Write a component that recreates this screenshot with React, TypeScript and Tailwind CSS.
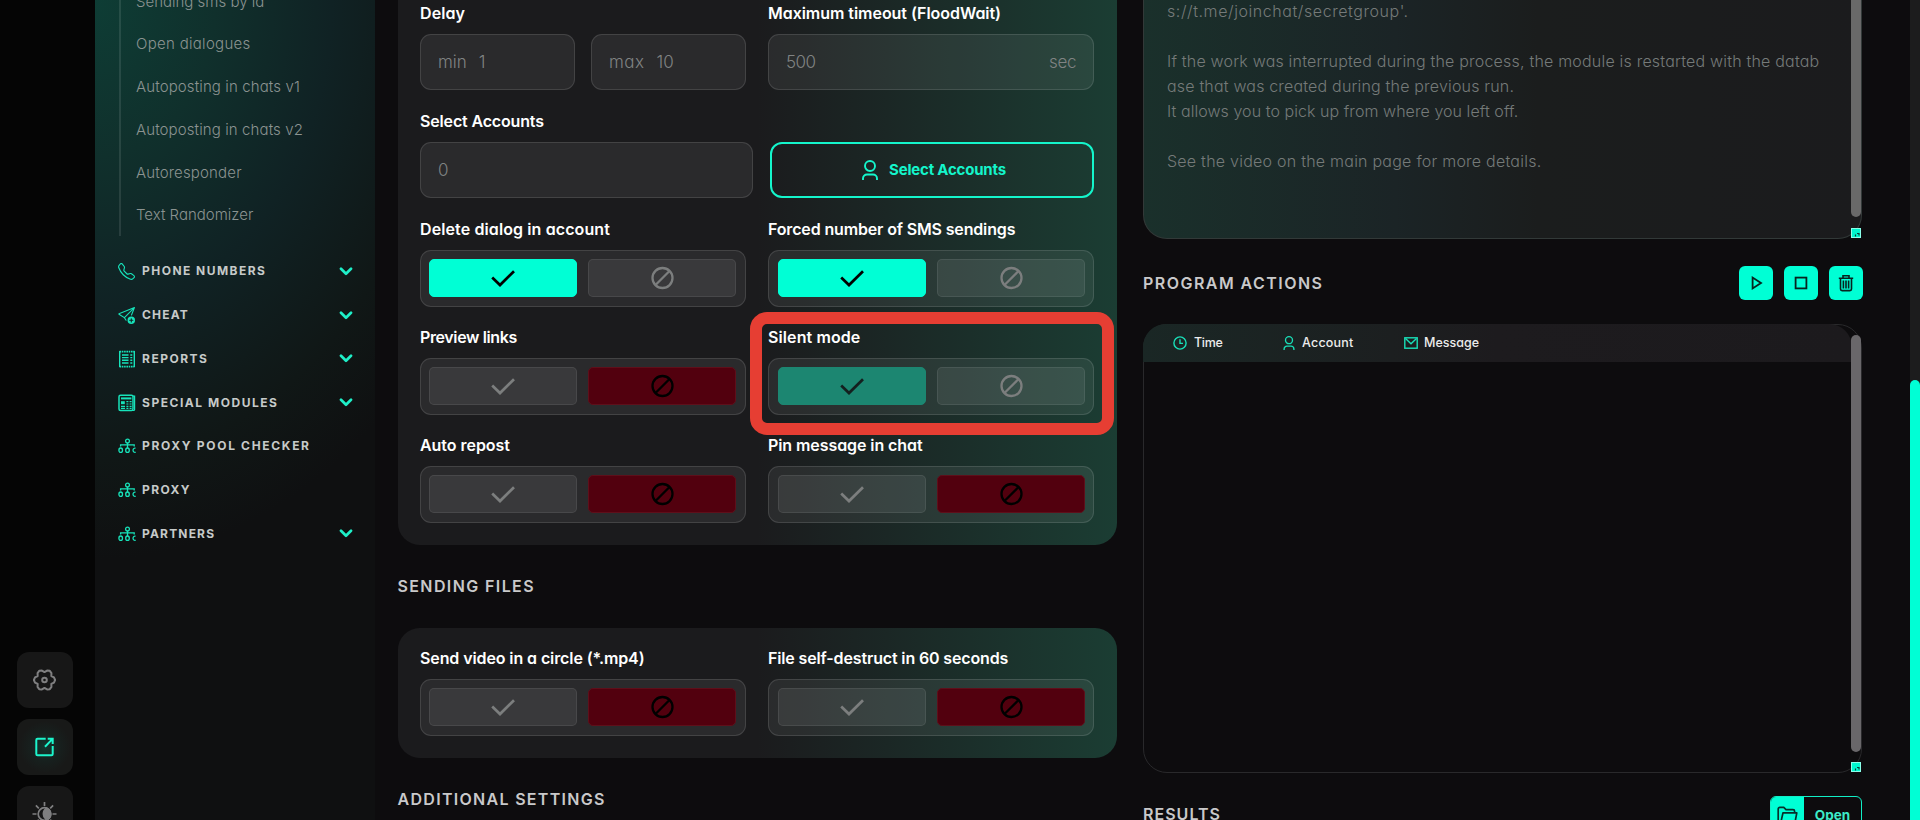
import type { ReactNode } from "react";
import { BsSendPlus, BsTelephone } from "react-icons/bs";

const Check = () => (
  <svg width="24" height="17" viewBox="0 0 24 17" fill="none" stroke="currentColor" strokeWidth="2.7">
    <path d="M1.2 7.5 9 15 23 1.2" />
  </svg>
);

const Ban = () => (
  <svg className="translate-x-[0.5px]" width="24" height="24" viewBox="0 0 24 24" fill="none" stroke="currentColor" strokeWidth="2.3">
    <circle cx="12" cy="12" r="10" />
    <path d="M5 19 19 5" />
  </svg>
);

const Chevron = () => (
  <svg width="14" height="9" viewBox="0 0 14 9" fill="none" stroke="#1fefc8" strokeWidth="2.7" strokeLinecap="round" strokeLinejoin="round">
    <path d="M2 1.8 7 6.7l5-4.9" />
  </svg>
);

const User = ({ className }: { className: string }) => (
  <svg className={className} viewBox="0 0 16 20" fill="none" stroke="currentColor" strokeWidth="1.9">
    <circle cx="8" cy="6" r="5" />
    <path d="M1 20v-1.5a4 4 0 0 1 4-4h6a4 4 0 0 1 4 4V20" />
  </svg>
);

const ReportIcon = () => (
  <svg width="18" height="18" viewBox="0 0 18 18" fill="none" stroke="currentColor">
    <path d="M1.7 1v16M16.3 1v16" strokeWidth="1.4" />
    <path d="M1.5 1.6h15M1.5 16.6h15" strokeWidth="1.6" strokeDasharray="1.6 .7" />
    <path d="M4 5h6.5M4 7.6h6.5M4 10.3h6.5M4 13h6.5M12.3 5h2M12.3 7.6h2M12.3 10.3h2M12.3 13h2" strokeWidth="1.4" />
  </svg>
);

const NewsIcon = () => (
  <svg width="18" height="18" viewBox="0 0 18 18" fill="none" stroke="currentColor">
    <rect x="1" y="1.2" width="14" height="15.3" rx="1.5" strokeWidth="1.5" />
    <path d="M15 2.2h1.6v13.4a1 1 0 0 1-1 .9H3" strokeWidth="1.2" />
    <path d="M3 4.4h10.4" strokeWidth="2" />
    <rect x="3" y="7.2" width="3.8" height="3" fill="currentColor" stroke="none" />
    <path d="M8.4 7.6h2M11.6 7.6h2M8.4 10h2M11.6 10h2M3 12.4h4M8.4 12.4h2M11.6 12.4h2M3 14.4h4M8.4 14.4h2M11.6 14.4h2" strokeWidth="1.2" />
  </svg>
);

const TreeIcon = () => (
  <svg width="18" height="16" viewBox="0 0 18 16" fill="none" stroke="currentColor" strokeWidth="1.3">
    <circle cx="9.5" cy="3" r="1.9" />
    <path d="M9.5 4.9V10M2.6 8.6V6.9h13.6v1.7" />
    <ellipse cx="2.7" cy="12.2" rx="1.8" ry="2.2" />
    <ellipse cx="9.5" cy="12.2" rx="1.8" ry="2.2" />
    <path d="M17.6 10.3a1.8 2.1 0 1 0 0 3.8" />
  </svg>
);

const gearPoints = Array.from({ length: 24 }, (_, i) => {
  const a = (i * Math.PI) / 12;
  const r = [10.6, 9.8, 7.9, 9.8][i % 4];
  return `${(12 + r * Math.cos(a)).toFixed(2)},${(12 + r * Math.sin(a)).toFixed(2)}`;
}).join(" ");

const Gear = () => (
  <svg className="-translate-x-[0.5px]" width="24" height="24" viewBox="0 0 24 24" fill="none" stroke="#7f7f80" strokeWidth="2" strokeLinejoin="round">
    <polygon points={gearPoints} />
    <circle cx="12" cy="12" r="2.3" />
  </svg>
);

const Export = () => (
  <svg className="-translate-x-[0.5px]" width="20" height="20" viewBox="0 0 20 20" fill="none" stroke="#1cf5cc" strokeWidth="2">
    <path d="M11.2 1.8H3a1.2 1.2 0 0 0-1.2 1.2v14a1.2 1.2 0 0 0 1.2 1.2h14a1.2 1.2 0 0 0 1.2-1.2V9M10.5 9.7 17.6 2.4M13.2 1.8h5V7" />
  </svg>
);

const SunMoon = () => (
  <svg className="-translate-x-[0.5px]" width="26" height="26" viewBox="0 0 26 26" fill="none" stroke="#7f7f80" strokeWidth="1.7">
    <circle cx="13" cy="13" r="6.3" />
    <path d="M15 7.3a6 6 0 0 1 0 11.4 6.8 6.8 0 0 1 0-11.4z" fill="#7f7f80" />
    <path d="M13 1v4M13 21v4M1 13h4M21 13h4M4.4 4.4l2.9 2.9M21.6 4.4l-2.9 2.9M4.4 21.6l2.9-2.9M21.6 21.6l-2.9-2.9" />
  </svg>
);

const subItems: [string, string][] = [
  ["Sending sms by id", "tracking-normal"],
  ["Open dialogues", "tracking-[0.3px]"],
  ["Autoposting in chats v1", "tracking-[0.12px]"],
  ["Autoposting in chats v2", "tracking-[0.11px]"],
  ["Autoresponder", "tracking-[0.16px]"],
  ["Text Randomizer", "tracking-normal"],
];

const navItems: { text: string; track: string; icon: ReactNode; open?: boolean }[] = [
  { text: "PHONE NUMBERS", track: "tracking-[1.47px]", icon: <BsTelephone size={17} />, open: true },
  { text: "CHEAT", track: "tracking-[1.2px]", icon: <BsSendPlus size={17} />, open: true },
  { text: "REPORTS", track: "tracking-[1.5px]", icon: <ReportIcon />, open: true },
  { text: "SPECIAL MODULES", track: "tracking-[1.53px]", icon: <NewsIcon />, open: true },
  { text: "PROXY POOL CHECKER", track: "tracking-[1.68px]", icon: <TreeIcon /> },
  { text: "PROXY", track: "tracking-[1.4px]", icon: <TreeIcon /> },
  { text: "PARTNERS", track: "tracking-[1.17px]", icon: <TreeIcon />, open: true },
];

function RailButton({ children, glow }: { children: ReactNode; glow?: boolean }) {
  return (
    <div
      className={
        "flex size-14 shrink-0 items-center justify-center rounded-xl bg-[#171717] " +
        (glow ? "bg-[radial-gradient(circle_at_center,#12382f_0%,#17201e_35%,#181918_65%)]" : "")
      }
    >
      {children}
    </div>
  );
}

function Rail() {
  return (
    <div className="flex w-[95px] shrink-0 flex-col gap-[11px] bg-[#050505] pt-[652px] pl-[17px]">
      <RailButton><Gear /></RailButton>
      <RailButton glow><Export /></RailButton>
      <RailButton><SunMoon /></RailButton>
    </div>
  );
}

function Sidebar() {
  return (
    <aside className="w-[280px] shrink-0 bg-[#0f1011] bg-[radial-gradient(ellipse_430px_560px_at_0_0,#0e3d35_0%,#10302c_28%,#102224_55%,#101716_82%,#0f1011_100%)] px-6">
      <ul className="-mt-[20.6px] border-l-2 border-white/10">
        {subItems.map(([text, track]) => (
          <li key={text} className={"flex h-[42.75px] items-center pt-[2px] pl-[15px] text-[15px] font-light whitespace-nowrap text-[#8b9391] " + track}>
            {text}
          </li>
        ))}
      </ul>
      <ul className="mt-[13.7px] -mr-1">
        {navItems.map((n) => (
          <li key={n.text} className="flex h-[43.75px] items-center text-[#17e3ba]">
            <span className="-ml-[1px] flex w-6 shrink-0">{n.icon}</span>
            <span className={"flex-1 text-xs font-bold whitespace-nowrap text-[#c6cac9] " + n.track}>{n.text}</span>
            {n.open && <span className="mr-[2px]"><Chevron /></span>}
          </li>
        ))}
      </ul>
    </aside>
  );
}

function Label({ children, track = "" }: { children: ReactNode; track?: string }) {
  return <div className={"mb-[11px] h-5 text-base leading-5 font-semibold whitespace-nowrap text-white " + track}>{children}</div>;
}

const field = "flex h-14 items-center rounded-[11px] border border-white/12 bg-white/[0.065] px-[17px] pt-[2px] text-[17px] font-light text-[#808383]";

type State = "yes" | "no" | "dim";

function Toggle({ label, track, state, right }: { label: string; track?: string; state: State; right?: boolean }) {
  const base = "flex h-[38px] w-[148px] items-center justify-center rounded-[5px] border ";
  const idle = "border-white/8 bg-white/[0.075] text-[#7c7e7e]";
  const yes = state === "yes" ? "border-[#00ffd5] bg-[#00ffd5] text-black" : state === "dim" ? "border-[#1c8671] bg-[#1c8671] text-[#14201f]" : idle;
  return (
    <div className="w-[326px]">
      <Label track={track}>{label}</Label>
      <div className={"flex h-[57px] gap-[11px] rounded-[11px] border border-white/12 bg-white/[0.065] pt-2 " + (right ? "pl-[9px]" : "pl-2")}>
        <div className={base + yes}><Check /></div>
        <div className={base + (state === "no" ? "border-[#5e0f1a] bg-[#52000e] text-black" : idle)}><Ban /></div>
      </div>
    </div>
  );
}

const cardBg = "w-[719px] bg-[linear-gradient(90deg,#1b1b1d_0%,#1b1b1d_50%,#1b2725_68%,#1b3d33_100%)] pl-[22px]";
const heading = "text-base font-semibold whitespace-nowrap text-[#c9c9ca] ";

function FormColumn() {
  return (
    <div className="w-[719px] shrink-0">
      <section className={cardBg + " relative h-[545px] rounded-b-[22px] pt-[3px]"}>
        <div className="flex gap-[22px]">
          <div className="w-[326px]">
            <Label track="tracking-[0.1px]">Delay</Label>
            <div className="flex gap-4">
              <div className={field + " w-[155px] gap-3"}><span>min</span><span>1</span></div>
              <div className={field + " w-[155px] gap-3"}><span className="tracking-[0.5px]">max</span><span>10</span></div>
            </div>
          </div>
          <div className="w-[326px]">
            <Label track="tracking-[-0.04px]">Maximum timeout (FloodWait)</Label>
            <div className={field + " justify-between"}>
              <span className="tracking-[-0.6px]">500</span>
              <span className="tracking-[-0.4px]">sec</span>
            </div>
          </div>
        </div>

        <div className="mt-[21px]">
          <Label track="tracking-[-0.16px]">Select Accounts</Label>
          <div className="flex gap-[17px]">
            <div className={field + " w-[333px]"}>0</div>
            <button className="flex h-14 w-[324px] items-center justify-center rounded-xl border-2 border-[#14f5cb] pl-1 text-[15px] font-bold tracking-[-0.2px] text-[#14f5cb]">
              <User className="mr-[11px] h-5 w-4" />
              Select Accounts
            </button>
          </div>
        </div>

        <div className="mt-[21px] grid grid-cols-[326px_326px] gap-x-[22px] gap-y-5">
          <Toggle label="Delete dialog in account" track="tracking-[0.11px]" state="yes" />
          <Toggle label="Forced number of SMS sendings" track="tracking-[-0.15px]" state="yes" right />
          <Toggle label="Preview links" track="tracking-[-0.38px]" state="no" />
          <Toggle label="Silent mode" track="tracking-[0.1px]" state="dim" right />
          <Toggle label="Auto repost" track="tracking-[-0.04px]" state="no" />
          <Toggle label="Pin message in chat" track="tracking-[-0.08px]" state="no" right />
        </div>

        <div className="pointer-events-none absolute top-[312px] left-[352px] h-[122.5px] w-[364px] rounded-[17px] border-[12px] border-[#e63e33]" />
      </section>

      <h2 className={heading + "mt-[29px] h-6 -translate-x-[0.5px] leading-6 tracking-[1.39px]"}>SENDING FILES</h2>

      <section className={cardBg + " mt-[30px] flex h-[130px] gap-[22px] rounded-[22px] pt-5"}>
        <Toggle label="Send video in a circle (*.mp4)" track="tracking-[-0.1px]" state="no" />
        <Toggle label="File self-destruct in 60 seconds" track="tracking-[-0.14px]" state="no" right />
      </section>

      <h2 className={heading + "mt-[29px] h-6 -translate-x-[0.5px] leading-6 tracking-[1.3px]"}>ADDITIONAL SETTINGS</h2>
    </div>
  );
}

const Grip = () => (
  <span className="absolute right-0 bottom-0 flex size-[10px] items-end justify-end border border-[#8affea] bg-[#00f5cd]">
    <svg width="6" height="6" viewBox="0 0 6 6" fill="none" stroke="#0b3b33" strokeWidth="1.2">
      <path d="M1.5 3.5v2M3 2.5h2v2" />
    </svg>
  </span>
);

const actionBtn = "flex size-[34px] items-center justify-center rounded-md bg-[#00ffd5] text-[#07241f]";

function OutputColumn() {
  return (
    <div className="w-[719px] shrink-0">
      <section className="relative h-[239px] rounded-b-[24px] border border-t-0 border-[#323938] bg-[linear-gradient(90deg,#1a302b_0%,#1b2426_35%,#1b1d1d_55%,#1b1b1d_100%)] pl-[23px]">
        <div className="-translate-y-px text-base leading-[25px] font-light whitespace-nowrap text-[#757a79]">
          <p className="tracking-[0.57px]">s://t.me/joinchat/secretgroup'.</p>
          <p className="mt-[25px] tracking-[0.2px]">If the work was interrupted during the process, the module is restarted with the datab</p>
          <p className="tracking-[0.18px]">ase that was created during the previous run.</p>
          <p className="tracking-[0.06px]">It allows you to pick up from where you left off.</p>
          <p className="mt-[25px] tracking-[0.24px]">See the video on the main page for more details.</p>
        </div>
        <span className="absolute top-0 right-0 h-[217px] w-[10px] rounded-b-full bg-[#696969]" />
        <Grip />
      </section>

      <div className="mt-[27px] flex h-[34px] items-center justify-between">
        <h2 className={heading + "tracking-[1.46px]"}>PROGRAM ACTIONS</h2>
        <div className="-mr-[0.5px] flex gap-[11px]">
          <button className={actionBtn}>
            <svg width="14" height="14" viewBox="0 0 14 14" fill="none" stroke="currentColor" strokeWidth="1.8"><path d="M3.6 1.6v10.8L12 7z" /></svg>
          </button>
          <button className={actionBtn}>
            <svg width="14" height="14" viewBox="0 0 14 14" fill="none" stroke="currentColor" strokeWidth="1.8"><rect x="1.6" y="1.6" width="10.8" height="10.8" /></svg>
          </button>
          <button className={actionBtn}>
            <svg width="16" height="18" viewBox="0 0 16 18" fill="none" stroke="currentColor" strokeWidth="1.6">
              <path d="M.8 4.2h14.4M5 4V1.8h6V4M2.5 4.4V15a1.6 1.6 0 0 0 1.6 1.6h7.8a1.6 1.6 0 0 0 1.6-1.6V4.4M5.4 6.4v8.2M8 6.4v8.2M10.6 6.4v8.2" />
            </svg>
          </button>
        </div>
      </div>

      <section className="relative mt-6 h-[449px] rounded-[24px] border border-[#29292b]">
        <div className="-mt-px -ml-px flex h-[38px] w-[709px] items-center rounded-t-[23px] bg-[linear-gradient(90deg,#1a2725_0%,#1c1f20_35%,#1d1b1e_50%,#1c1a1d_100%)] pl-[30px] text-[12.5px] font-medium text-[#ececec]">
          <div className="flex w-[110px] items-center">
            <svg className="mr-[7px] text-[#19dfb8]" width="14" height="14" viewBox="0 0 14 14" fill="none" stroke="currentColor" strokeWidth="1.4"><circle cx="7" cy="7" r="6.1" /><path d="M7 3.3V7.4h3" /></svg>
            <span className="tracking-[-0.3px]">Time</span>
          </div>
          <div className="flex w-[121px] items-center">
            <User className="mr-[7px] h-[14px] w-[12px] text-[#19dfb8]" />
            <span className="tracking-[0.2px]">Account</span>
          </div>
          <div className="flex items-center">
            <svg className="mr-[6px] text-[#19dfb8]" width="14" height="12" viewBox="0 0 14 12" fill="none" stroke="currentColor" strokeWidth="1.4"><rect x=".8" y=".8" width="12.4" height="10.4" /><path d="m1.5 1.5 5.5 5.3 5.5-5.3" /></svg>
            <span>Message</span>
          </div>
        </div>
        <span className="absolute top-[10px] right-0 h-[417px] w-[10px] rounded-full bg-[#69676a]" />
        <Grip />
      </section>

      <div className="mt-[23px] flex h-[38px] justify-between">
        <h2 className={heading + "leading-[37px] tracking-[1.03px]"}>RESULTS</h2>
        <button className="flex w-[92px] overflow-hidden rounded-md border border-[#11efc6] text-[13.5px] font-bold text-[#3cebc8]">
          <span className="flex h-full w-[33px] items-center justify-center bg-[#00ffd5] text-[#07302a]">
            <svg width="21" height="19" viewBox="0 0 21 19" fill="none" stroke="currentColor" strokeWidth="1.7" strokeLinejoin="round">
              <path d="M3.6 17.5A2 2 0 0 1 1.2 16V3a1.6 1.6 0 0 1 1.6-1.6h4L9 3.6h7a1.6 1.6 0 0 1 1.6 1.6v1.6M3.6 17.5 6 6.8h13.8l-2 10.7z" />
            </svg>
          </span>
          <span className="flex h-full flex-1 items-center justify-center">Open</span>
        </button>
      </div>
    </div>
  );
}

export default function App() {
  return (
    <div className="flex h-[820px] w-[1920px] overflow-hidden bg-[#0d0c0e] font-['Inter','Noto_Sans',sans-serif] [font-feature-settings:'cv11']">
      <Rail />
      <Sidebar />
      <main className="flex flex-1 gap-[26px] pl-[23px]">
        <FormColumn />
        <OutputColumn />
      </main>
      <div className="flex w-[10px] shrink-0 flex-col bg-[#1c1c1d] pt-[380px]">
        <div className="flex-1 rounded-t-full bg-[#00ffd5]" />
      </div>
    </div>
  );
}
